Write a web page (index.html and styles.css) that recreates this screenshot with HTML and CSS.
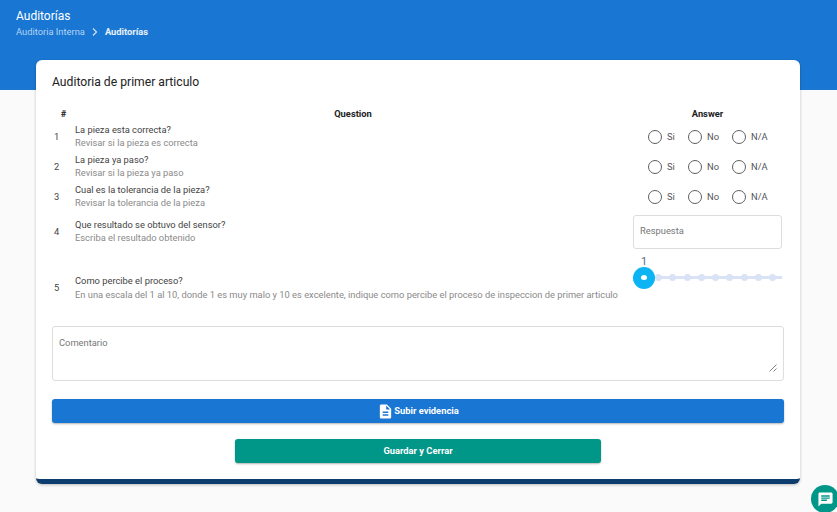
FILE: index.html
```html
<!DOCTYPE html>
<html lang="es">
<head>
<meta charset="utf-8">
<title>Auditorías</title>
<link rel="stylesheet" href="styles.css">
</head>
<body>
<header class="hero">
  <div class="hero-title">Auditorías</div>
  <nav class="crumbs">
    <span class="crumb-link">Auditoria Interna</span>
    <svg class="crumb-sep" viewBox="0 0 8 10" width="8" height="10"><path d="M2 1.500l3.500 3.500-3.500 3.500" fill="none" stroke="#cfe2f6" stroke-width="1.200"/></svg>
    <span class="crumb-current">Auditorías</span>
  </nav>
</header>
<main class="card">
  <h1 class="card-title">Auditoria de primer articulo</h1>
  <div class="questions">
    <div class="q-head">
      <div class="c-num">#</div>
      <div class="c-question">Question</div>
      <div class="c-answer">Answer</div>
    </div>
    <div class="q-row r-radio">
      <div class="num">1</div>
      <div class="q-text"><div class="q-main">La pieza esta correcta?</div><div class="q-sub">Revisar si la pieza es correcta</div></div>
      <div class="radios">
        <span class="radio r1"><i class="dot"></i><span class="lbl">Si</span></span><span class="radio r2"><i class="dot"></i><span class="lbl">No</span></span><span class="radio"><i class="dot"></i><span class="lbl">N/A</span></span>
      </div>
    </div>
    <div class="q-row r-radio">
      <div class="num">2</div>
      <div class="q-text"><div class="q-main">La pieza ya paso?</div><div class="q-sub">Revisar si la pieza ya paso</div></div>
      <div class="radios">
        <span class="radio r1"><i class="dot"></i><span class="lbl">Si</span></span><span class="radio r2"><i class="dot"></i><span class="lbl">No</span></span><span class="radio"><i class="dot"></i><span class="lbl">N/A</span></span>
      </div>
    </div>
    <div class="q-row r-radio">
      <div class="num">3</div>
      <div class="q-text"><div class="q-main">Cual es la tolerancia de la pieza?</div><div class="q-sub">Revisar la tolerancia de la pieza</div></div>
      <div class="radios">
        <span class="radio r1"><i class="dot"></i><span class="lbl">Si</span></span><span class="radio r2"><i class="dot"></i><span class="lbl">No</span></span><span class="radio"><i class="dot"></i><span class="lbl">N/A</span></span>
      </div>
    </div>
    <div class="q-row r-input">
      <div class="num">4</div>
      <div class="q-text"><div class="q-main">Que resultado se obtuvo del sensor?</div><div class="q-sub">Escriba el resultado obtenido</div></div>
      <div class="answer-box">Respuesta</div>
    </div>
    <div class="q-row r-slider">
      <div class="num">5</div>
      <div class="q-text"><div class="q-main">Como percibe el proceso?</div><div class="q-sub">En una escala del 1 al 10, donde 1 es muy malo y 10 es excelente, indique como percibe el proceso de inspeccion de primer articulo</div></div>
      <div class="slider">
        <div class="slider-value">1</div>
        <div class="slider-rail">
          <span class="thumb"><i></i></span>
          <div class="ticks"><i></i><i></i><i></i><i></i><i></i><i></i><i></i><i></i><i></i></div>
        </div>
      </div>
    </div>
  </div>
  <div class="comment">
    <span>Comentario</span>
    <svg class="grip" viewBox="0 0 8 8" width="8" height="8"><path d="M0.500 7.500l7-7M4.500 7.500l3-3" stroke="#666" stroke-width="0.800" fill="none"/></svg>
  </div>
  <button class="btn btn-upload" type="button">
    <svg viewBox="0 0 24 24" width="17" height="17"><path fill="#fff" d="M14 2H6c-1.100 0-2 .9-2 2v16c0 1.100.9 2 2 2h12c1.100 0 2-.9 2-2V8l-6-6zm2 16H8v-2h8v2zm0-4H8v-2h8v2zm-3-5V3.500L18.500 9H13z"/></svg>
    <span class="btn-label">Subir evidencia</span>
  </button>
  <div class="save-wrap"><button class="btn btn-save" type="button"><span class="btn-label">Guardar y Cerrar</span></button></div>
</main>
<button class="chat-fab" type="button" aria-label="Chat">
  <svg viewBox="0 0 24 24" width="17" height="17"><path fill="#fff" d="M20 2H4c-1.100 0-2 .9-2 2v18l4-4h14c1.100 0 2-.9 2-2V4c0-1.100-.9-2-2-2zM6 9h12v2H6V9zm8 5H6v-2h8v2zm4-6H6V6h12v2z"/></svg>
</button>
</body>
</html>
```
FILE: styles.css
```css
* { box-sizing: border-box; }
html, body { margin: 0; height: 512px; overflow: hidden; }
body {
  background: #fafafa;
  font-family: Roboto, "Liberation Sans", sans-serif;
  color: #333;
  position: relative;
}
.hero {
  background: #1976d2;
  height: 90px;
  padding: 9px 16px 0;
  color: #fff;
}
.hero-title { font-size: 12px; line-height: 15px; }
.crumbs {
  display: flex;
  align-items: center;
  gap: 6px;
  margin-top: 1px;
  font-size: 9.330px;
  line-height: 14px;
}
.crumb-link { color: #b3d4f5; }
.crumb-current { font-weight: 700; color: #e8f1fb; }
.card {
  width: 764px;
  height: 424px;
  margin: -30px 0 0 36px;
  padding: 14px 16px 0;
  background: #fff;
  border-radius: 6px;
  border-bottom: 5px solid #0d3c6e;
  box-shadow: 0 1px 3px rgba(0,0,0,.25);
  position: relative;
}
.card-title {
  margin: 0;
  font-size: 12.170px;
  font-weight: 400;
  line-height: 16px;
  color: #222;
}
.questions { margin-top: 16px; }
.q-head, .q-row {
  display: grid;
  align-items: center;
}
.q-head {
  grid-template-columns: 23px 556px 153px;
  height: 16px;
  padding-bottom: 2px;
  font-size: 9.330px;
  font-weight: 700;
  color: #222;
  text-align: center;
}
.q-row { grid-template-columns: 23px 558px 149px; }
.r-radio { height: 30px; }
.r-input { height: 40px; }
.r-slider { height: 72px; }
.num { font-size: 9.330px; padding: 0 0 2px 2px; color: #444; }
.q-text { padding-bottom: 3px; }
.r-input .q-text { padding-bottom: 2px; }
.r-slider .q-text { padding-bottom: 1px; }
.q-main { font-size: 9.330px; line-height: 13px; color: #444; }
.q-sub { font-size: 9.330px; line-height: 13px; color: #8a8a8a; }
.r-slider .q-sub { margin-top: 1px; }
.radios { display: flex; align-items: center; padding-left: 15px; }
.radio { display: inline-flex; align-items: center; gap: 5px; font-size: 9.330px; color: #555; }
.lbl { margin-bottom: 2px; }
.r1 { width: 40px; }
.r2 { width: 44px; }
.dot {
  width: 14px;
  height: 14px;
  border: 1px solid #5f5f5f;
  border-radius: 50%;
  display: block;
}
.answer-box {
  height: 34px;
  border: 1px solid #ddd;
  border-radius: 3px;
  padding: 0 6px;
  font-size: 9.330px;
  line-height: 30px;
  color: #777;
}
.slider { align-self: start; position: relative; height: 44px; padding-top: 3px; }
.slider-value {
  font-size: 11px;
  line-height: 13px;
  width: 22px;
  text-align: center;
  color: #5a6b8c;
}
.slider-rail {
  position: relative;
  height: 3px;
  margin-top: 8px;
  background: #d9e3f5;
}
.thumb {
  position: absolute;
  left: 0;
  top: -9.500px;
  width: 22px;
  height: 22px;
  border-radius: 50%;
  background: #0db4f3;
  display: flex;
  align-items: center;
  justify-content: center;
}
.thumb i { width: 6px; height: 5px; border-radius: 50%; background: #fff; display: block; }
.ticks {
  position: absolute;
  left: 22px;
  top: -2px;
  display: flex;
  gap: 7.300px;
}
.ticks i { width: 7px; height: 7px; border-radius: 50%; background: #d9e3f5; display: block; }
.comment {
  margin-top: 2px;
  height: 55px;
  border: 1px solid #ddd;
  border-radius: 3px;
  padding: 10px 6px;
  font-size: 9.330px;
  line-height: 12px;
  color: #777;
  position: relative;
}
.grip { position: absolute; right: 6px; bottom: 8px; }
.btn {
  display: flex;
  align-items: center;
  justify-content: center;
  height: 24px;
  border: 0;
  border-radius: 3px;
  color: #fff;
  font-family: inherit;
  font-size: 9.330px;
  font-weight: 700;
  box-shadow: 0 1px 2px rgba(0,0,0,.3);
  padding: 0;
}
.btn-label { margin-bottom: 2px; }
.btn-upload { width: 100%; margin-top: 18px; background: #1976d2; }
.save-wrap { display: flex; justify-content: center; margin-top: 16px; }
.btn-save { width: 366px; background: #009688; }
.chat-fab {
  position: absolute;
  left: 811px;
  top: 485px;
  width: 28px;
  height: 28px;
  border: 0;
  padding: 0;
  border-radius: 50%;
  background: #009688;
  display: flex;
  align-items: center;
  justify-content: center;
}
```
